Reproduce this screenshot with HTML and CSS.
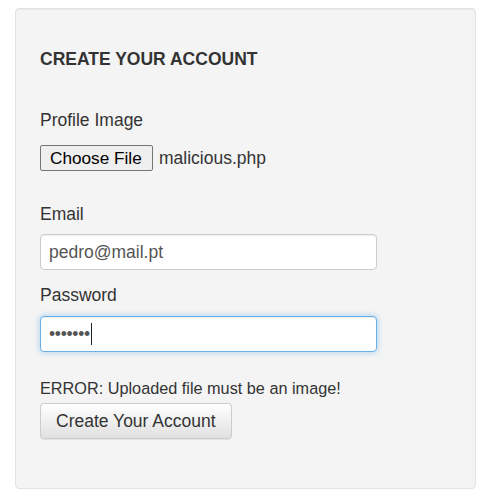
FILE: index.html
```html
<!DOCTYPE html>
<html>
<head>
<meta charset="utf-8">
<link rel="stylesheet" href="styles.css">
</head>
<body>
<div class="well">
  <h4 class="title">CREATE YOUR ACCOUNT</h4>
  <label class="lbl lbl-first">Profile Image</label>
  <div class="file-row">
    <span class="file-btn">Choose File</span>
    <span class="file-name">malicious.php</span>
  </div>
  <label class="lbl lbl-email">Email</label>
  <div class="input">pedro@mail.pt</div>
  <label class="lbl lbl-pass">Password</label>
  <div class="input focus"><span class="dots">•••••••</span><span class="caret"></span></div>
  <p class="error">ERROR: Uploaded file must be an image!</p>
  <span class="btn">Create Your Account</span>
</div>
</body>
</html>
```
FILE: styles.css
```css
html, body { margin: 0; padding: 0; background: #fff; }
body {
  font-family: "Liberation Sans", Arial, sans-serif;
  font-size: 17.5px;
  line-height: 22px;
  color: #333;
  padding: 8px 14px 0 15px;
}
.well {
  width: 411px;
  background: #f4f4f4;
  border: 1px solid #e3e3e3;
  border-radius: 4px;
  box-shadow: inset 0 1px 1px rgba(0,0,0,.05);
  padding: 24px 24px 49px 24px;
  display: flex;
  flex-direction: column;
  align-items: flex-start;
}
.title {
  margin: 15px 0 0 0;
  font-size: 17.5px;
  font-weight: bold;
  line-height: 22px;
  color: #333;
}
.lbl { display: block; font-weight: normal; }
.lbl-first { margin-top: 39px; }
.file-row { display: flex; align-items: center; margin-top: 14px; height: 26px; }
.file-btn {
  box-sizing: border-box;
  width: 113px;
  height: 26px;
  padding: 0 9px;
  display: flex; align-items: center;
  background: #efefef;
  border: 1px solid #767676;
  border-radius: 2px;
  color: #000;
  font-size: 17.2px;
}
.file-name { margin-left: 6px; color: #333; }
.lbl-email { margin-top: 32px; }
.input {
  box-sizing: border-box;
  width: 337px;
  height: 36px;
  margin-top: 9px;
  padding: 0 8px;
  display: flex; align-items: center;
  background: #fff;
  border: 1px solid #ccc;
  border-radius: 4px;
  box-shadow: inset 0 1px 1px rgba(0,0,0,.075);
  color: #555;
}
.lbl-pass { margin-top: 14px; }
.input.focus {
  margin-top: 10px;
  border-color: #66afe9;
  box-shadow: inset 0 1px 1px rgba(0,0,0,.075), 0 0 6px rgba(102,175,233,.6);
}
.dots { color: #555; letter-spacing: -0.3px; }
.caret { display: inline-block; width: 1px; height: 22px; background: #222; margin-left: 1px; }
.error { margin: 25px 0 0 0; font-size: 16.25px; }
.btn {
  box-sizing: border-box;
  margin-top: 4px;
  height: 36px;
  width: 192px;
  padding: 0 15px;
  display: flex; align-items: center;
  border: 1px solid #ccc;
  border-radius: 4px;
  background: linear-gradient(to bottom, #fff 0%, #e0e0e0 100%);
  box-shadow: inset 0 1px 0 rgba(255,255,255,.15), 0 1px 1px rgba(0,0,0,.075);
  color: #333;
  font-size: 17.5px;
}
```
